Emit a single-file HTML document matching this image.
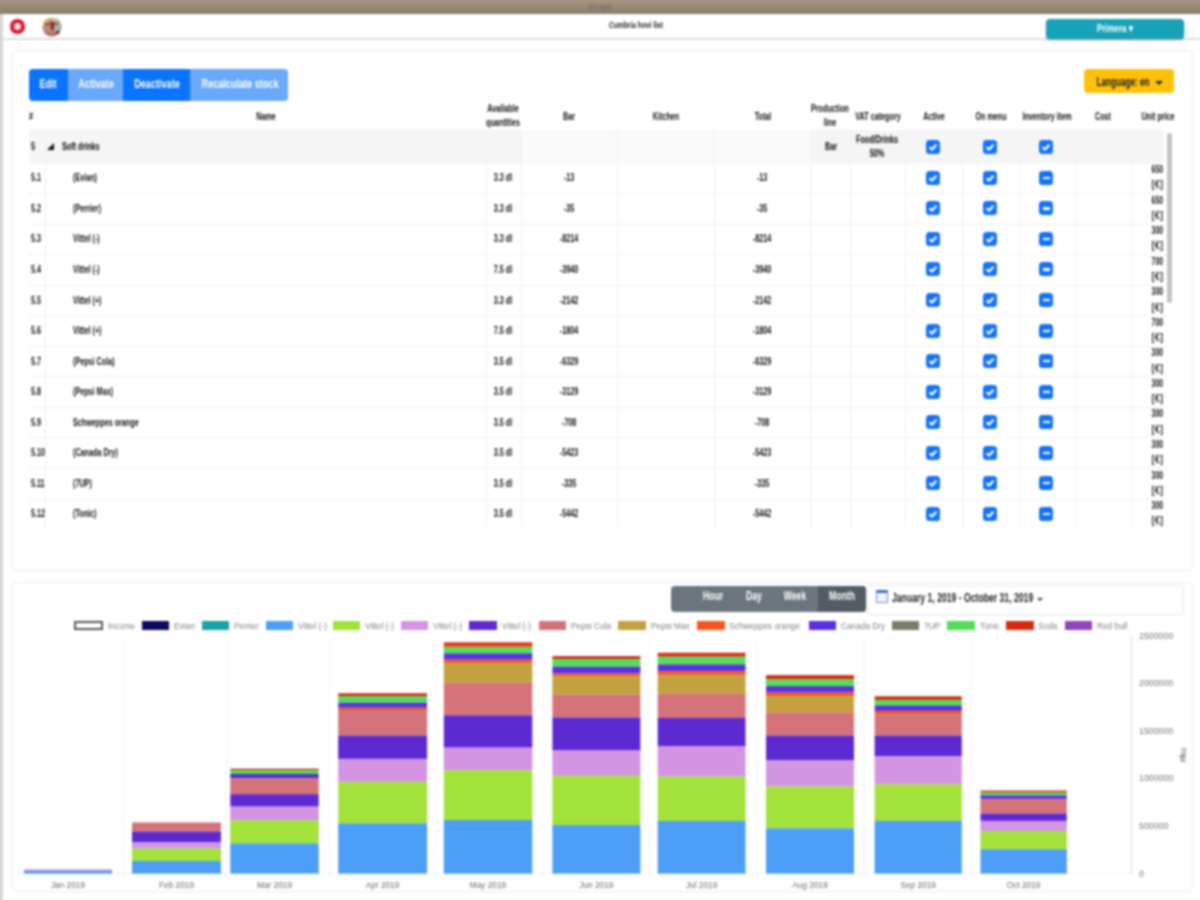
<!DOCTYPE html>
<html><head><meta charset="utf-8">
<style>
*{margin:0;padding:0;box-sizing:border-box}
html,body{width:1200px;height:900px;overflow:hidden;background:#fff;font-family:"Liberation Sans",sans-serif}
.t{position:absolute;white-space:nowrap}
</style></head><body><div id="w" style="position:absolute;left:0;top:0;width:1200px;height:900px;filter:blur(0.8px)">
<div style="position:absolute;left:-6px;top:-6px;width:1212px;height:19.5px;background:linear-gradient(#a59684 0,#a59684 6px,#8c7b69)"></div>
<div class="t" style="left:400.0px;width:400px;text-align:center;top:1.8px;font-size:8px;line-height:10.4px;font-weight:normal;color:#6d6660;transform:scaleX(0.8);transform-origin:50% 50%;">Vi-Lagre</div>
<div style="position:absolute;left:-6px;top:13.5px;width:8.5px;height:893px;background:#d6d6d6"></div>
<div style="position:absolute;left:2px;top:38px;width:1198px;height:1.5px;background:#dddddd"></div>
<div style="position:absolute;left:10px;top:19px;width:14.5px;height:14.5px;border-radius:50%;background:#df1530"></div>
<div style="position:absolute;left:13.5px;top:22.5px;width:7.5px;height:7.5px;border-radius:50%;background:#ece0e0"></div>
<svg style="position:absolute;left:41.5px;top:16.5px" width="20" height="20" viewBox="0 0 20 20"><defs><clipPath id="av"><circle cx="10" cy="10" r="9.6"/></clipPath></defs>
<g clip-path="url(#av)"><rect width="20" height="20" fill="#b9897c"/>
<path d="M0 0 H11 Q9 3 6 5 Q3 6 2 9 H0Z" fill="#d9b45a"/>
<path d="M9 0 H16 Q14 3 12 4 Q10 3 9 0Z" fill="#cfd2b0"/>
<rect x="13" y="3" width="7" height="11" fill="#a9b2a8"/>
<rect x="3" y="6" width="13" height="2" fill="#8a5a4a"/>
<path d="M8.5 5 H12 L11.5 13 H9Z" fill="#a3202a"/>
<circle cx="16" cy="15.5" r="1.8" fill="#5a2a2a"/>
<rect x="2" y="15" width="12" height="4" fill="#a87868"/></g></svg>
<div class="t" style="left:435.8px;width:400px;text-align:center;top:19.6px;font-size:9px;line-height:11.7px;font-weight:bold;color:#222;transform:scaleX(0.74);transform-origin:50% 50%;">Cumbria hovi list</div>
<div style="position:absolute;left:1046px;top:19px;width:138px;height:19.5px;border-radius:4px;background:#17a2b8;box-shadow:0 1px 2px rgba(0,0,0,.35)"></div>
<div class="t" style="left:915.0px;width:400px;text-align:center;top:20.9px;font-size:11px;line-height:14.3px;font-weight:bold;color:#fff;transform:scaleX(0.72);transform-origin:50% 50%;">Primera ▾</div>

<div style="position:absolute;left:12px;top:50px;width:1181px;height:521px;border:1px solid #eeeeee;border-radius:4px"></div>
<div style="position:absolute;left:29px;top:69px;width:259px;height:32px;border-radius:4px;overflow:hidden">
 <div style="position:absolute;left:0;top:0;width:39px;height:32px;background:#0a74ff"></div>
 <div style="position:absolute;left:39px;top:0;width:55px;height:32px;background:#69a8fa"></div>
 <div style="position:absolute;left:94px;top:0;width:67px;height:32px;background:#0a74ff"></div>
 <div style="position:absolute;left:161px;top:0;width:98px;height:32px;background:#69a8fa"></div>
</div>
<div class="t" style="left:-152.0px;width:400px;text-align:center;top:76.0px;font-size:13px;line-height:16.9px;font-weight:bold;color:#fff;transform:scaleX(0.7);transform-origin:50% 50%;">Edit</div>
<div class="t" style="left:-104.5px;width:400px;text-align:center;top:76.0px;font-size:13px;line-height:16.9px;font-weight:bold;color:#fff;transform:scaleX(0.7);transform-origin:50% 50%;">Activate</div>
<div class="t" style="left:-43.0px;width:400px;text-align:center;top:76.0px;font-size:13px;line-height:16.9px;font-weight:bold;color:#fff;transform:scaleX(0.7);transform-origin:50% 50%;">Deactivate</div>
<div class="t" style="left:39.5px;width:400px;text-align:center;top:76.0px;font-size:13px;line-height:16.9px;font-weight:bold;color:#fff;transform:scaleX(0.7);transform-origin:50% 50%;">Recalculate stock</div>
<div style="position:absolute;left:1084px;top:69px;width:90px;height:24px;border-radius:4px;background:#ffc107"></div>
<div class="t" style="left:922.5px;width:400px;text-align:center;top:75.2px;font-size:12px;line-height:15.6px;font-weight:bold;color:#1a1a1a;transform:scaleX(0.68);transform-origin:50% 50%;">Language: en</div>
<div style="position:absolute;left:1155px;top:80.5px;width:0;height:0;border-left:4px solid transparent;border-right:4px solid transparent;border-top:4px solid #222"></div>
<div style="position:absolute;left:29px;top:130px;width:1135px;height:33.5px;background:#f5f5f5"></div>
<div style="position:absolute;left:521px;top:130px;width:289px;height:33.5px;background:#fafafa"></div>
<div style="position:absolute;left:45px;top:130px;width:1px;height:398px;background:#f2f2f2"></div>
<div style="position:absolute;left:486px;top:130px;width:1px;height:398px;background:#f2f2f2"></div>
<div style="position:absolute;left:521px;top:130px;width:1px;height:398px;background:#f2f2f2"></div>
<div style="position:absolute;left:617px;top:130px;width:1px;height:398px;background:#f2f2f2"></div>
<div style="position:absolute;left:714px;top:130px;width:1px;height:398px;background:#f2f2f2"></div>
<div style="position:absolute;left:810px;top:130px;width:1px;height:398px;background:#f2f2f2"></div>
<div style="position:absolute;left:850px;top:130px;width:1px;height:398px;background:#f2f2f2"></div>
<div style="position:absolute;left:905px;top:130px;width:1px;height:398px;background:#f2f2f2"></div>
<div style="position:absolute;left:962px;top:130px;width:1px;height:398px;background:#f2f2f2"></div>
<div style="position:absolute;left:1019px;top:130px;width:1px;height:398px;background:#f2f2f2"></div>
<div style="position:absolute;left:1075px;top:130px;width:1px;height:398px;background:#f2f2f2"></div>
<div style="position:absolute;left:1131px;top:130px;width:1px;height:398px;background:#f2f2f2"></div>
<div class="t" style="left:29.0px;top:108.8px;font-size:11px;line-height:14.3px;font-weight:bold;color:#111;transform:scaleX(0.655);transform-origin:0 50%;">#</div>
<div class="t" style="left:65.5px;width:400px;text-align:center;top:108.8px;font-size:11px;line-height:14.3px;font-weight:bold;color:#111;transform:scaleX(0.655);transform-origin:50% 50%;">Name</div>
<div class="t" style="left:303.0px;width:400px;text-align:center;top:101.3px;font-size:11px;line-height:14.3px;font-weight:bold;color:#111;transform:scaleX(0.655);transform-origin:50% 50%;">Available</div>
<div class="t" style="left:303.0px;width:400px;text-align:center;top:115.3px;font-size:11px;line-height:14.3px;font-weight:bold;color:#111;transform:scaleX(0.655);transform-origin:50% 50%;">quantities</div>
<div class="t" style="left:369.0px;width:400px;text-align:center;top:108.8px;font-size:11px;line-height:14.3px;font-weight:bold;color:#111;transform:scaleX(0.655);transform-origin:50% 50%;">Bar</div>
<div class="t" style="left:465.5px;width:400px;text-align:center;top:108.8px;font-size:11px;line-height:14.3px;font-weight:bold;color:#111;transform:scaleX(0.655);transform-origin:50% 50%;">Kitchen</div>
<div class="t" style="left:563.0px;width:400px;text-align:center;top:108.8px;font-size:11px;line-height:14.3px;font-weight:bold;color:#111;transform:scaleX(0.655);transform-origin:50% 50%;">Total</div>
<div class="t" style="left:630.0px;width:400px;text-align:center;top:101.3px;font-size:11px;line-height:14.3px;font-weight:bold;color:#111;transform:scaleX(0.655);transform-origin:50% 50%;">Production</div>
<div class="t" style="left:630.0px;width:400px;text-align:center;top:115.3px;font-size:11px;line-height:14.3px;font-weight:bold;color:#111;transform:scaleX(0.655);transform-origin:50% 50%;">line</div>
<div class="t" style="left:677.5px;width:400px;text-align:center;top:108.8px;font-size:11px;line-height:14.3px;font-weight:bold;color:#111;transform:scaleX(0.655);transform-origin:50% 50%;">VAT category</div>
<div class="t" style="left:734.0px;width:400px;text-align:center;top:108.8px;font-size:11px;line-height:14.3px;font-weight:bold;color:#111;transform:scaleX(0.655);transform-origin:50% 50%;">Active</div>
<div class="t" style="left:790.5px;width:400px;text-align:center;top:108.8px;font-size:11px;line-height:14.3px;font-weight:bold;color:#111;transform:scaleX(0.655);transform-origin:50% 50%;">On menu</div>
<div class="t" style="left:847.0px;width:400px;text-align:center;top:108.8px;font-size:11px;line-height:14.3px;font-weight:bold;color:#111;transform:scaleX(0.655);transform-origin:50% 50%;">Inventory item</div>
<div class="t" style="left:903.0px;width:400px;text-align:center;top:108.8px;font-size:11px;line-height:14.3px;font-weight:bold;color:#111;transform:scaleX(0.655);transform-origin:50% 50%;">Cost</div>
<div class="t" style="left:958.0px;width:400px;text-align:center;top:108.8px;font-size:11px;line-height:14.3px;font-weight:bold;color:#111;transform:scaleX(0.655);transform-origin:50% 50%;">Unit price</div>
<div class="t" style="left:31.0px;top:138.8px;font-size:11px;line-height:14.3px;font-weight:bold;color:#111;transform:scaleX(0.655);transform-origin:0 50%;">5</div>
<div style="position:absolute;left:47px;top:143px;width:0;height:0;border-left:7px solid transparent;border-bottom:7px solid #111"></div>
<div class="t" style="left:62.0px;top:138.8px;font-size:11px;line-height:14.3px;font-weight:bold;color:#111;transform:scaleX(0.655);transform-origin:0 50%;">Soft drinks</div>
<div class="t" style="left:630.5px;width:400px;text-align:center;top:138.8px;font-size:11px;line-height:14.3px;font-weight:bold;color:#111;transform:scaleX(0.655);transform-origin:50% 50%;">Bar</div>
<div class="t" style="left:677.0px;width:400px;text-align:center;top:131.8px;font-size:11px;line-height:14.3px;font-weight:bold;color:#111;transform:scaleX(0.655);transform-origin:50% 50%;">Food/Drinks</div>
<div class="t" style="left:677.0px;width:400px;text-align:center;top:146.3px;font-size:11px;line-height:14.3px;font-weight:bold;color:#111;transform:scaleX(0.655);transform-origin:50% 50%;">50%</div>
<div style="position:absolute;left:926.4px;top:139.5px;width:14px;height:14px;border-radius:3.5px;background:#1472f7"><svg width="14" height="14" style="position:absolute;left:0;top:0"><path d="M3.6 7.3 L6 9.5 L10.5 4.8" fill="none" stroke="#fff" stroke-width="2.2"/></svg></div>
<div style="position:absolute;left:982.6px;top:139.5px;width:14px;height:14px;border-radius:3.5px;background:#1472f7"><svg width="14" height="14" style="position:absolute;left:0;top:0"><path d="M3.6 7.3 L6 9.5 L10.5 4.8" fill="none" stroke="#fff" stroke-width="2.2"/></svg></div>
<div style="position:absolute;left:1039.0px;top:139.5px;width:14px;height:14px;border-radius:3.5px;background:#1472f7"><svg width="14" height="14" style="position:absolute;left:0;top:0"><path d="M3.6 7.3 L6 9.5 L10.5 4.8" fill="none" stroke="#fff" stroke-width="2.2"/></svg></div>
<div style="position:absolute;left:29px;top:193.1px;width:1138px;height:1px;background:#efefef"></div>
<div class="t" style="left:30.5px;top:170.3px;font-size:11px;line-height:14.3px;font-weight:bold;color:#111;transform:scaleX(0.655);transform-origin:0 50%;">5.1</div>
<div class="t" style="left:73.0px;top:170.3px;font-size:11px;line-height:14.3px;font-weight:bold;color:#111;transform:scaleX(0.655);transform-origin:0 50%;">(Evian)</div>
<div class="t" style="left:303.0px;width:400px;text-align:center;top:170.3px;font-size:11px;line-height:14.3px;font-weight:bold;color:#111;transform:scaleX(0.655);transform-origin:50% 50%;">3.3 dl</div>
<div class="t" style="left:369.0px;width:400px;text-align:center;top:170.3px;font-size:11px;line-height:14.3px;font-weight:bold;color:#111;transform:scaleX(0.655);transform-origin:50% 50%;">-13</div>
<div class="t" style="left:562.0px;width:400px;text-align:center;top:170.3px;font-size:11px;line-height:14.3px;font-weight:bold;color:#111;transform:scaleX(0.655);transform-origin:50% 50%;">-13</div>
<div class="t" style="left:763.0px;width:400px;text-align:right;top:162.0px;font-size:11px;line-height:14.3px;font-weight:bold;color:#111;transform:scaleX(0.62);transform-origin:100% 50%;">650</div>
<div class="t" style="left:763.0px;width:400px;text-align:right;top:177.3px;font-size:11px;line-height:14.3px;font-weight:bold;color:#333;transform:scaleX(0.85);transform-origin:100% 50%;">[€]</div>
<div style="position:absolute;left:926.4px;top:170.8px;width:14px;height:14px;border-radius:3.5px;background:#1472f7"><svg width="14" height="14" style="position:absolute;left:0;top:0"><path d="M3.6 7.3 L6 9.5 L10.5 4.8" fill="none" stroke="#fff" stroke-width="2.2"/></svg></div>
<div style="position:absolute;left:982.6px;top:170.8px;width:14px;height:14px;border-radius:3.5px;background:#1472f7"><svg width="14" height="14" style="position:absolute;left:0;top:0"><path d="M3.6 7.3 L6 9.5 L10.5 4.8" fill="none" stroke="#fff" stroke-width="2.2"/></svg></div>
<div style="position:absolute;left:1039.0px;top:170.8px;width:14px;height:14px;border-radius:3.5px;background:#1472f7"><div style="position:absolute;left:3.5px;top:6px;width:7px;height:2.2px;background:#fff"></div></div>
<div style="position:absolute;left:29px;top:223.6px;width:1138px;height:1px;background:#efefef"></div>
<div class="t" style="left:30.5px;top:200.9px;font-size:11px;line-height:14.3px;font-weight:bold;color:#111;transform:scaleX(0.655);transform-origin:0 50%;">5.2</div>
<div class="t" style="left:73.0px;top:200.9px;font-size:11px;line-height:14.3px;font-weight:bold;color:#111;transform:scaleX(0.655);transform-origin:0 50%;">(Perrier)</div>
<div class="t" style="left:303.0px;width:400px;text-align:center;top:200.9px;font-size:11px;line-height:14.3px;font-weight:bold;color:#111;transform:scaleX(0.655);transform-origin:50% 50%;">3.3 dl</div>
<div class="t" style="left:369.0px;width:400px;text-align:center;top:200.9px;font-size:11px;line-height:14.3px;font-weight:bold;color:#111;transform:scaleX(0.655);transform-origin:50% 50%;">-35</div>
<div class="t" style="left:562.0px;width:400px;text-align:center;top:200.9px;font-size:11px;line-height:14.3px;font-weight:bold;color:#111;transform:scaleX(0.655);transform-origin:50% 50%;">-35</div>
<div class="t" style="left:763.0px;width:400px;text-align:right;top:192.6px;font-size:11px;line-height:14.3px;font-weight:bold;color:#111;transform:scaleX(0.62);transform-origin:100% 50%;">650</div>
<div class="t" style="left:763.0px;width:400px;text-align:right;top:207.9px;font-size:11px;line-height:14.3px;font-weight:bold;color:#333;transform:scaleX(0.85);transform-origin:100% 50%;">[€]</div>
<div style="position:absolute;left:926.4px;top:201.4px;width:14px;height:14px;border-radius:3.5px;background:#1472f7"><svg width="14" height="14" style="position:absolute;left:0;top:0"><path d="M3.6 7.3 L6 9.5 L10.5 4.8" fill="none" stroke="#fff" stroke-width="2.2"/></svg></div>
<div style="position:absolute;left:982.6px;top:201.4px;width:14px;height:14px;border-radius:3.5px;background:#1472f7"><svg width="14" height="14" style="position:absolute;left:0;top:0"><path d="M3.6 7.3 L6 9.5 L10.5 4.8" fill="none" stroke="#fff" stroke-width="2.2"/></svg></div>
<div style="position:absolute;left:1039.0px;top:201.4px;width:14px;height:14px;border-radius:3.5px;background:#1472f7"><div style="position:absolute;left:3.5px;top:6px;width:7px;height:2.2px;background:#fff"></div></div>
<div style="position:absolute;left:29px;top:254.2px;width:1138px;height:1px;background:#efefef"></div>
<div class="t" style="left:30.5px;top:231.4px;font-size:11px;line-height:14.3px;font-weight:bold;color:#111;transform:scaleX(0.655);transform-origin:0 50%;">5.3</div>
<div class="t" style="left:73.0px;top:231.4px;font-size:11px;line-height:14.3px;font-weight:bold;color:#111;transform:scaleX(0.655);transform-origin:0 50%;">Vittel (-)</div>
<div class="t" style="left:303.0px;width:400px;text-align:center;top:231.4px;font-size:11px;line-height:14.3px;font-weight:bold;color:#111;transform:scaleX(0.655);transform-origin:50% 50%;">3.3 dl</div>
<div class="t" style="left:369.0px;width:400px;text-align:center;top:231.4px;font-size:11px;line-height:14.3px;font-weight:bold;color:#111;transform:scaleX(0.655);transform-origin:50% 50%;">-8214</div>
<div class="t" style="left:562.0px;width:400px;text-align:center;top:231.4px;font-size:11px;line-height:14.3px;font-weight:bold;color:#111;transform:scaleX(0.655);transform-origin:50% 50%;">-8214</div>
<div class="t" style="left:763.0px;width:400px;text-align:right;top:223.1px;font-size:11px;line-height:14.3px;font-weight:bold;color:#111;transform:scaleX(0.62);transform-origin:100% 50%;">300</div>
<div class="t" style="left:763.0px;width:400px;text-align:right;top:238.4px;font-size:11px;line-height:14.3px;font-weight:bold;color:#333;transform:scaleX(0.85);transform-origin:100% 50%;">[€]</div>
<div style="position:absolute;left:926.4px;top:231.9px;width:14px;height:14px;border-radius:3.5px;background:#1472f7"><svg width="14" height="14" style="position:absolute;left:0;top:0"><path d="M3.6 7.3 L6 9.5 L10.5 4.8" fill="none" stroke="#fff" stroke-width="2.2"/></svg></div>
<div style="position:absolute;left:982.6px;top:231.9px;width:14px;height:14px;border-radius:3.5px;background:#1472f7"><svg width="14" height="14" style="position:absolute;left:0;top:0"><path d="M3.6 7.3 L6 9.5 L10.5 4.8" fill="none" stroke="#fff" stroke-width="2.2"/></svg></div>
<div style="position:absolute;left:1039.0px;top:231.9px;width:14px;height:14px;border-radius:3.5px;background:#1472f7"><div style="position:absolute;left:3.5px;top:6px;width:7px;height:2.2px;background:#fff"></div></div>
<div style="position:absolute;left:29px;top:284.7px;width:1138px;height:1px;background:#efefef"></div>
<div class="t" style="left:30.5px;top:262.0px;font-size:11px;line-height:14.3px;font-weight:bold;color:#111;transform:scaleX(0.655);transform-origin:0 50%;">5.4</div>
<div class="t" style="left:73.0px;top:262.0px;font-size:11px;line-height:14.3px;font-weight:bold;color:#111;transform:scaleX(0.655);transform-origin:0 50%;">Vittel (-)</div>
<div class="t" style="left:303.0px;width:400px;text-align:center;top:262.0px;font-size:11px;line-height:14.3px;font-weight:bold;color:#111;transform:scaleX(0.655);transform-origin:50% 50%;">7.5 dl</div>
<div class="t" style="left:369.0px;width:400px;text-align:center;top:262.0px;font-size:11px;line-height:14.3px;font-weight:bold;color:#111;transform:scaleX(0.655);transform-origin:50% 50%;">-3940</div>
<div class="t" style="left:562.0px;width:400px;text-align:center;top:262.0px;font-size:11px;line-height:14.3px;font-weight:bold;color:#111;transform:scaleX(0.655);transform-origin:50% 50%;">-3940</div>
<div class="t" style="left:763.0px;width:400px;text-align:right;top:253.7px;font-size:11px;line-height:14.3px;font-weight:bold;color:#111;transform:scaleX(0.62);transform-origin:100% 50%;">700</div>
<div class="t" style="left:763.0px;width:400px;text-align:right;top:269.0px;font-size:11px;line-height:14.3px;font-weight:bold;color:#333;transform:scaleX(0.85);transform-origin:100% 50%;">[€]</div>
<div style="position:absolute;left:926.4px;top:262.4px;width:14px;height:14px;border-radius:3.5px;background:#1472f7"><svg width="14" height="14" style="position:absolute;left:0;top:0"><path d="M3.6 7.3 L6 9.5 L10.5 4.8" fill="none" stroke="#fff" stroke-width="2.2"/></svg></div>
<div style="position:absolute;left:982.6px;top:262.4px;width:14px;height:14px;border-radius:3.5px;background:#1472f7"><svg width="14" height="14" style="position:absolute;left:0;top:0"><path d="M3.6 7.3 L6 9.5 L10.5 4.8" fill="none" stroke="#fff" stroke-width="2.2"/></svg></div>
<div style="position:absolute;left:1039.0px;top:262.4px;width:14px;height:14px;border-radius:3.5px;background:#1472f7"><div style="position:absolute;left:3.5px;top:6px;width:7px;height:2.2px;background:#fff"></div></div>
<div style="position:absolute;left:29px;top:315.2px;width:1138px;height:1px;background:#efefef"></div>
<div class="t" style="left:30.5px;top:292.6px;font-size:11px;line-height:14.3px;font-weight:bold;color:#111;transform:scaleX(0.655);transform-origin:0 50%;">5.5</div>
<div class="t" style="left:73.0px;top:292.6px;font-size:11px;line-height:14.3px;font-weight:bold;color:#111;transform:scaleX(0.655);transform-origin:0 50%;">Vittel (+)</div>
<div class="t" style="left:303.0px;width:400px;text-align:center;top:292.6px;font-size:11px;line-height:14.3px;font-weight:bold;color:#111;transform:scaleX(0.655);transform-origin:50% 50%;">3.3 dl</div>
<div class="t" style="left:369.0px;width:400px;text-align:center;top:292.6px;font-size:11px;line-height:14.3px;font-weight:bold;color:#111;transform:scaleX(0.655);transform-origin:50% 50%;">-2142</div>
<div class="t" style="left:562.0px;width:400px;text-align:center;top:292.6px;font-size:11px;line-height:14.3px;font-weight:bold;color:#111;transform:scaleX(0.655);transform-origin:50% 50%;">-2142</div>
<div class="t" style="left:763.0px;width:400px;text-align:right;top:284.2px;font-size:11px;line-height:14.3px;font-weight:bold;color:#111;transform:scaleX(0.62);transform-origin:100% 50%;">300</div>
<div class="t" style="left:763.0px;width:400px;text-align:right;top:299.6px;font-size:11px;line-height:14.3px;font-weight:bold;color:#333;transform:scaleX(0.85);transform-origin:100% 50%;">[€]</div>
<div style="position:absolute;left:926.4px;top:293.0px;width:14px;height:14px;border-radius:3.5px;background:#1472f7"><svg width="14" height="14" style="position:absolute;left:0;top:0"><path d="M3.6 7.3 L6 9.5 L10.5 4.8" fill="none" stroke="#fff" stroke-width="2.2"/></svg></div>
<div style="position:absolute;left:982.6px;top:293.0px;width:14px;height:14px;border-radius:3.5px;background:#1472f7"><svg width="14" height="14" style="position:absolute;left:0;top:0"><path d="M3.6 7.3 L6 9.5 L10.5 4.8" fill="none" stroke="#fff" stroke-width="2.2"/></svg></div>
<div style="position:absolute;left:1039.0px;top:293.0px;width:14px;height:14px;border-radius:3.5px;background:#1472f7"><div style="position:absolute;left:3.5px;top:6px;width:7px;height:2.2px;background:#fff"></div></div>
<div style="position:absolute;left:29px;top:345.8px;width:1138px;height:1px;background:#efefef"></div>
<div class="t" style="left:30.5px;top:323.1px;font-size:11px;line-height:14.3px;font-weight:bold;color:#111;transform:scaleX(0.655);transform-origin:0 50%;">5.6</div>
<div class="t" style="left:73.0px;top:323.1px;font-size:11px;line-height:14.3px;font-weight:bold;color:#111;transform:scaleX(0.655);transform-origin:0 50%;">Vittel (+)</div>
<div class="t" style="left:303.0px;width:400px;text-align:center;top:323.1px;font-size:11px;line-height:14.3px;font-weight:bold;color:#111;transform:scaleX(0.655);transform-origin:50% 50%;">7.5 dl</div>
<div class="t" style="left:369.0px;width:400px;text-align:center;top:323.1px;font-size:11px;line-height:14.3px;font-weight:bold;color:#111;transform:scaleX(0.655);transform-origin:50% 50%;">-1804</div>
<div class="t" style="left:562.0px;width:400px;text-align:center;top:323.1px;font-size:11px;line-height:14.3px;font-weight:bold;color:#111;transform:scaleX(0.655);transform-origin:50% 50%;">-1804</div>
<div class="t" style="left:763.0px;width:400px;text-align:right;top:314.8px;font-size:11px;line-height:14.3px;font-weight:bold;color:#111;transform:scaleX(0.62);transform-origin:100% 50%;">700</div>
<div class="t" style="left:763.0px;width:400px;text-align:right;top:330.1px;font-size:11px;line-height:14.3px;font-weight:bold;color:#333;transform:scaleX(0.85);transform-origin:100% 50%;">[€]</div>
<div style="position:absolute;left:926.4px;top:323.6px;width:14px;height:14px;border-radius:3.5px;background:#1472f7"><svg width="14" height="14" style="position:absolute;left:0;top:0"><path d="M3.6 7.3 L6 9.5 L10.5 4.8" fill="none" stroke="#fff" stroke-width="2.2"/></svg></div>
<div style="position:absolute;left:982.6px;top:323.6px;width:14px;height:14px;border-radius:3.5px;background:#1472f7"><svg width="14" height="14" style="position:absolute;left:0;top:0"><path d="M3.6 7.3 L6 9.5 L10.5 4.8" fill="none" stroke="#fff" stroke-width="2.2"/></svg></div>
<div style="position:absolute;left:1039.0px;top:323.6px;width:14px;height:14px;border-radius:3.5px;background:#1472f7"><div style="position:absolute;left:3.5px;top:6px;width:7px;height:2.2px;background:#fff"></div></div>
<div style="position:absolute;left:29px;top:376.4px;width:1138px;height:1px;background:#efefef"></div>
<div class="t" style="left:30.5px;top:353.7px;font-size:11px;line-height:14.3px;font-weight:bold;color:#111;transform:scaleX(0.655);transform-origin:0 50%;">5.7</div>
<div class="t" style="left:73.0px;top:353.7px;font-size:11px;line-height:14.3px;font-weight:bold;color:#111;transform:scaleX(0.655);transform-origin:0 50%;">(Pepsi Cola)</div>
<div class="t" style="left:303.0px;width:400px;text-align:center;top:353.7px;font-size:11px;line-height:14.3px;font-weight:bold;color:#111;transform:scaleX(0.655);transform-origin:50% 50%;">3.5 dl</div>
<div class="t" style="left:369.0px;width:400px;text-align:center;top:353.7px;font-size:11px;line-height:14.3px;font-weight:bold;color:#111;transform:scaleX(0.655);transform-origin:50% 50%;">-6329</div>
<div class="t" style="left:562.0px;width:400px;text-align:center;top:353.7px;font-size:11px;line-height:14.3px;font-weight:bold;color:#111;transform:scaleX(0.655);transform-origin:50% 50%;">-6329</div>
<div class="t" style="left:763.0px;width:400px;text-align:right;top:345.4px;font-size:11px;line-height:14.3px;font-weight:bold;color:#111;transform:scaleX(0.62);transform-origin:100% 50%;">300</div>
<div class="t" style="left:763.0px;width:400px;text-align:right;top:360.7px;font-size:11px;line-height:14.3px;font-weight:bold;color:#333;transform:scaleX(0.85);transform-origin:100% 50%;">[€]</div>
<div style="position:absolute;left:926.4px;top:354.1px;width:14px;height:14px;border-radius:3.5px;background:#1472f7"><svg width="14" height="14" style="position:absolute;left:0;top:0"><path d="M3.6 7.3 L6 9.5 L10.5 4.8" fill="none" stroke="#fff" stroke-width="2.2"/></svg></div>
<div style="position:absolute;left:982.6px;top:354.1px;width:14px;height:14px;border-radius:3.5px;background:#1472f7"><svg width="14" height="14" style="position:absolute;left:0;top:0"><path d="M3.6 7.3 L6 9.5 L10.5 4.8" fill="none" stroke="#fff" stroke-width="2.2"/></svg></div>
<div style="position:absolute;left:1039.0px;top:354.1px;width:14px;height:14px;border-radius:3.5px;background:#1472f7"><div style="position:absolute;left:3.5px;top:6px;width:7px;height:2.2px;background:#fff"></div></div>
<div style="position:absolute;left:29px;top:406.9px;width:1138px;height:1px;background:#efefef"></div>
<div class="t" style="left:30.5px;top:384.2px;font-size:11px;line-height:14.3px;font-weight:bold;color:#111;transform:scaleX(0.655);transform-origin:0 50%;">5.8</div>
<div class="t" style="left:73.0px;top:384.2px;font-size:11px;line-height:14.3px;font-weight:bold;color:#111;transform:scaleX(0.655);transform-origin:0 50%;">(Pepsi Max)</div>
<div class="t" style="left:303.0px;width:400px;text-align:center;top:384.2px;font-size:11px;line-height:14.3px;font-weight:bold;color:#111;transform:scaleX(0.655);transform-origin:50% 50%;">3.5 dl</div>
<div class="t" style="left:369.0px;width:400px;text-align:center;top:384.2px;font-size:11px;line-height:14.3px;font-weight:bold;color:#111;transform:scaleX(0.655);transform-origin:50% 50%;">-3129</div>
<div class="t" style="left:562.0px;width:400px;text-align:center;top:384.2px;font-size:11px;line-height:14.3px;font-weight:bold;color:#111;transform:scaleX(0.655);transform-origin:50% 50%;">-3129</div>
<div class="t" style="left:763.0px;width:400px;text-align:right;top:375.9px;font-size:11px;line-height:14.3px;font-weight:bold;color:#111;transform:scaleX(0.62);transform-origin:100% 50%;">300</div>
<div class="t" style="left:763.0px;width:400px;text-align:right;top:391.2px;font-size:11px;line-height:14.3px;font-weight:bold;color:#333;transform:scaleX(0.85);transform-origin:100% 50%;">[€]</div>
<div style="position:absolute;left:926.4px;top:384.7px;width:14px;height:14px;border-radius:3.5px;background:#1472f7"><svg width="14" height="14" style="position:absolute;left:0;top:0"><path d="M3.6 7.3 L6 9.5 L10.5 4.8" fill="none" stroke="#fff" stroke-width="2.2"/></svg></div>
<div style="position:absolute;left:982.6px;top:384.7px;width:14px;height:14px;border-radius:3.5px;background:#1472f7"><svg width="14" height="14" style="position:absolute;left:0;top:0"><path d="M3.6 7.3 L6 9.5 L10.5 4.8" fill="none" stroke="#fff" stroke-width="2.2"/></svg></div>
<div style="position:absolute;left:1039.0px;top:384.7px;width:14px;height:14px;border-radius:3.5px;background:#1472f7"><div style="position:absolute;left:3.5px;top:6px;width:7px;height:2.2px;background:#fff"></div></div>
<div style="position:absolute;left:29px;top:437.4px;width:1138px;height:1px;background:#efefef"></div>
<div class="t" style="left:30.5px;top:414.8px;font-size:11px;line-height:14.3px;font-weight:bold;color:#111;transform:scaleX(0.655);transform-origin:0 50%;">5.9</div>
<div class="t" style="left:73.0px;top:414.8px;font-size:11px;line-height:14.3px;font-weight:bold;color:#111;transform:scaleX(0.655);transform-origin:0 50%;">Schweppes orange</div>
<div class="t" style="left:303.0px;width:400px;text-align:center;top:414.8px;font-size:11px;line-height:14.3px;font-weight:bold;color:#111;transform:scaleX(0.655);transform-origin:50% 50%;">3.5 dl</div>
<div class="t" style="left:369.0px;width:400px;text-align:center;top:414.8px;font-size:11px;line-height:14.3px;font-weight:bold;color:#111;transform:scaleX(0.655);transform-origin:50% 50%;">-708</div>
<div class="t" style="left:562.0px;width:400px;text-align:center;top:414.8px;font-size:11px;line-height:14.3px;font-weight:bold;color:#111;transform:scaleX(0.655);transform-origin:50% 50%;">-708</div>
<div class="t" style="left:763.0px;width:400px;text-align:right;top:406.4px;font-size:11px;line-height:14.3px;font-weight:bold;color:#111;transform:scaleX(0.62);transform-origin:100% 50%;">300</div>
<div class="t" style="left:763.0px;width:400px;text-align:right;top:421.8px;font-size:11px;line-height:14.3px;font-weight:bold;color:#333;transform:scaleX(0.85);transform-origin:100% 50%;">[€]</div>
<div style="position:absolute;left:926.4px;top:415.2px;width:14px;height:14px;border-radius:3.5px;background:#1472f7"><svg width="14" height="14" style="position:absolute;left:0;top:0"><path d="M3.6 7.3 L6 9.5 L10.5 4.8" fill="none" stroke="#fff" stroke-width="2.2"/></svg></div>
<div style="position:absolute;left:982.6px;top:415.2px;width:14px;height:14px;border-radius:3.5px;background:#1472f7"><svg width="14" height="14" style="position:absolute;left:0;top:0"><path d="M3.6 7.3 L6 9.5 L10.5 4.8" fill="none" stroke="#fff" stroke-width="2.2"/></svg></div>
<div style="position:absolute;left:1039.0px;top:415.2px;width:14px;height:14px;border-radius:3.5px;background:#1472f7"><div style="position:absolute;left:3.5px;top:6px;width:7px;height:2.2px;background:#fff"></div></div>
<div style="position:absolute;left:29px;top:468.0px;width:1138px;height:1px;background:#efefef"></div>
<div class="t" style="left:30.5px;top:445.3px;font-size:11px;line-height:14.3px;font-weight:bold;color:#111;transform:scaleX(0.655);transform-origin:0 50%;">5.10</div>
<div class="t" style="left:73.0px;top:445.3px;font-size:11px;line-height:14.3px;font-weight:bold;color:#111;transform:scaleX(0.655);transform-origin:0 50%;">(Canada Dry)</div>
<div class="t" style="left:303.0px;width:400px;text-align:center;top:445.3px;font-size:11px;line-height:14.3px;font-weight:bold;color:#111;transform:scaleX(0.655);transform-origin:50% 50%;">3.5 dl</div>
<div class="t" style="left:369.0px;width:400px;text-align:center;top:445.3px;font-size:11px;line-height:14.3px;font-weight:bold;color:#111;transform:scaleX(0.655);transform-origin:50% 50%;">-5423</div>
<div class="t" style="left:562.0px;width:400px;text-align:center;top:445.3px;font-size:11px;line-height:14.3px;font-weight:bold;color:#111;transform:scaleX(0.655);transform-origin:50% 50%;">-5423</div>
<div class="t" style="left:763.0px;width:400px;text-align:right;top:437.0px;font-size:11px;line-height:14.3px;font-weight:bold;color:#111;transform:scaleX(0.62);transform-origin:100% 50%;">300</div>
<div class="t" style="left:763.0px;width:400px;text-align:right;top:452.3px;font-size:11px;line-height:14.3px;font-weight:bold;color:#333;transform:scaleX(0.85);transform-origin:100% 50%;">[€]</div>
<div style="position:absolute;left:926.4px;top:445.8px;width:14px;height:14px;border-radius:3.5px;background:#1472f7"><svg width="14" height="14" style="position:absolute;left:0;top:0"><path d="M3.6 7.3 L6 9.5 L10.5 4.8" fill="none" stroke="#fff" stroke-width="2.2"/></svg></div>
<div style="position:absolute;left:982.6px;top:445.8px;width:14px;height:14px;border-radius:3.5px;background:#1472f7"><svg width="14" height="14" style="position:absolute;left:0;top:0"><path d="M3.6 7.3 L6 9.5 L10.5 4.8" fill="none" stroke="#fff" stroke-width="2.2"/></svg></div>
<div style="position:absolute;left:1039.0px;top:445.8px;width:14px;height:14px;border-radius:3.5px;background:#1472f7"><div style="position:absolute;left:3.5px;top:6px;width:7px;height:2.2px;background:#fff"></div></div>
<div style="position:absolute;left:29px;top:498.6px;width:1138px;height:1px;background:#efefef"></div>
<div class="t" style="left:30.5px;top:475.9px;font-size:11px;line-height:14.3px;font-weight:bold;color:#111;transform:scaleX(0.655);transform-origin:0 50%;">5.11</div>
<div class="t" style="left:73.0px;top:475.9px;font-size:11px;line-height:14.3px;font-weight:bold;color:#111;transform:scaleX(0.655);transform-origin:0 50%;">(7UP)</div>
<div class="t" style="left:303.0px;width:400px;text-align:center;top:475.9px;font-size:11px;line-height:14.3px;font-weight:bold;color:#111;transform:scaleX(0.655);transform-origin:50% 50%;">3.5 dl</div>
<div class="t" style="left:369.0px;width:400px;text-align:center;top:475.9px;font-size:11px;line-height:14.3px;font-weight:bold;color:#111;transform:scaleX(0.655);transform-origin:50% 50%;">-335</div>
<div class="t" style="left:562.0px;width:400px;text-align:center;top:475.9px;font-size:11px;line-height:14.3px;font-weight:bold;color:#111;transform:scaleX(0.655);transform-origin:50% 50%;">-335</div>
<div class="t" style="left:763.0px;width:400px;text-align:right;top:467.6px;font-size:11px;line-height:14.3px;font-weight:bold;color:#111;transform:scaleX(0.62);transform-origin:100% 50%;">300</div>
<div class="t" style="left:763.0px;width:400px;text-align:right;top:482.9px;font-size:11px;line-height:14.3px;font-weight:bold;color:#333;transform:scaleX(0.85);transform-origin:100% 50%;">[€]</div>
<div style="position:absolute;left:926.4px;top:476.3px;width:14px;height:14px;border-radius:3.5px;background:#1472f7"><svg width="14" height="14" style="position:absolute;left:0;top:0"><path d="M3.6 7.3 L6 9.5 L10.5 4.8" fill="none" stroke="#fff" stroke-width="2.2"/></svg></div>
<div style="position:absolute;left:982.6px;top:476.3px;width:14px;height:14px;border-radius:3.5px;background:#1472f7"><svg width="14" height="14" style="position:absolute;left:0;top:0"><path d="M3.6 7.3 L6 9.5 L10.5 4.8" fill="none" stroke="#fff" stroke-width="2.2"/></svg></div>
<div style="position:absolute;left:1039.0px;top:476.3px;width:14px;height:14px;border-radius:3.5px;background:#1472f7"><div style="position:absolute;left:3.5px;top:6px;width:7px;height:2.2px;background:#fff"></div></div>
<div class="t" style="left:30.5px;top:506.4px;font-size:11px;line-height:14.3px;font-weight:bold;color:#111;transform:scaleX(0.655);transform-origin:0 50%;">5.12</div>
<div class="t" style="left:73.0px;top:506.4px;font-size:11px;line-height:14.3px;font-weight:bold;color:#111;transform:scaleX(0.655);transform-origin:0 50%;">(Tonic)</div>
<div class="t" style="left:303.0px;width:400px;text-align:center;top:506.4px;font-size:11px;line-height:14.3px;font-weight:bold;color:#111;transform:scaleX(0.655);transform-origin:50% 50%;">3.5 dl</div>
<div class="t" style="left:369.0px;width:400px;text-align:center;top:506.4px;font-size:11px;line-height:14.3px;font-weight:bold;color:#111;transform:scaleX(0.655);transform-origin:50% 50%;">-5442</div>
<div class="t" style="left:562.0px;width:400px;text-align:center;top:506.4px;font-size:11px;line-height:14.3px;font-weight:bold;color:#111;transform:scaleX(0.655);transform-origin:50% 50%;">-5442</div>
<div class="t" style="left:763.0px;width:400px;text-align:right;top:498.1px;font-size:11px;line-height:14.3px;font-weight:bold;color:#111;transform:scaleX(0.62);transform-origin:100% 50%;">300</div>
<div class="t" style="left:763.0px;width:400px;text-align:right;top:513.4px;font-size:11px;line-height:14.3px;font-weight:bold;color:#333;transform:scaleX(0.85);transform-origin:100% 50%;">[€]</div>
<div style="position:absolute;left:926.4px;top:506.8px;width:14px;height:14px;border-radius:3.5px;background:#1472f7"><svg width="14" height="14" style="position:absolute;left:0;top:0"><path d="M3.6 7.3 L6 9.5 L10.5 4.8" fill="none" stroke="#fff" stroke-width="2.2"/></svg></div>
<div style="position:absolute;left:982.6px;top:506.8px;width:14px;height:14px;border-radius:3.5px;background:#1472f7"><svg width="14" height="14" style="position:absolute;left:0;top:0"><path d="M3.6 7.3 L6 9.5 L10.5 4.8" fill="none" stroke="#fff" stroke-width="2.2"/></svg></div>
<div style="position:absolute;left:1039.0px;top:506.8px;width:14px;height:14px;border-radius:3.5px;background:#1472f7"><div style="position:absolute;left:3.5px;top:6px;width:7px;height:2.2px;background:#fff"></div></div>
<div style="position:absolute;left:1167px;top:133px;width:5px;height:170px;background:#c4c4c4;border-radius:2px"></div>

<div style="position:absolute;left:12px;top:582px;width:1181px;height:310px;border:1px solid #eeeeee;border-radius:4px"></div>
<div style="position:absolute;left:671px;top:586px;width:195px;height:26px;border-radius:4px;overflow:hidden;background:#6c757d">
 <div style="position:absolute;left:147px;top:0;width:48px;height:26px;background:#545b62"></div>
</div>
<div class="t" style="left:513.0px;width:400px;text-align:center;top:588.7px;font-size:12px;line-height:15.6px;font-weight:bold;color:#fff;transform:scaleX(0.72);transform-origin:50% 50%;">Hour</div>
<div class="t" style="left:553.5px;width:400px;text-align:center;top:588.7px;font-size:12px;line-height:15.6px;font-weight:bold;color:#fff;transform:scaleX(0.72);transform-origin:50% 50%;">Day</div>
<div class="t" style="left:594.5px;width:400px;text-align:center;top:588.7px;font-size:12px;line-height:15.6px;font-weight:bold;color:#fff;transform:scaleX(0.72);transform-origin:50% 50%;">Week</div>
<div class="t" style="left:642.0px;width:400px;text-align:center;top:588.7px;font-size:12px;line-height:15.6px;font-weight:bold;color:#fff;transform:scaleX(0.72);transform-origin:50% 50%;">Month</div>
<div style="position:absolute;left:867px;top:585px;width:317px;height:30px;border:1px solid #e6e6e6;border-radius:2px"></div>
<div style="position:absolute;left:876px;top:590px;width:12px;height:13px;border:1px solid #6a8fc8;border-top:3px solid #3d6fc0;background:#eef3fb"></div>
<div class="t" style="left:892.0px;top:591.2px;font-size:12px;line-height:15.6px;font-weight:bold;color:#222;transform:scaleX(0.72);transform-origin:0 50%;">January 1, 2019 - October 31, 2019</div>
<div style="position:absolute;left:1037px;top:598px;width:0;height:0;border-left:3px solid transparent;border-right:3px solid transparent;border-top:3px solid #333"></div>
<svg width="1200" height="900" style="position:absolute;left:0;top:0">
<line x1="123" y1="637" x2="123" y2="878" stroke="#f3f3f3" stroke-width="1"/>
<line x1="226.5" y1="637" x2="226.5" y2="878" stroke="#f3f3f3" stroke-width="1"/>
<line x1="330" y1="637" x2="330" y2="878" stroke="#f3f3f3" stroke-width="1"/>
<line x1="436" y1="637" x2="436" y2="878" stroke="#f3f3f3" stroke-width="1"/>
<line x1="542" y1="637" x2="542" y2="878" stroke="#f3f3f3" stroke-width="1"/>
<line x1="649" y1="637" x2="649" y2="878" stroke="#f3f3f3" stroke-width="1"/>
<line x1="757" y1="637" x2="757" y2="878" stroke="#f3f3f3" stroke-width="1"/>
<line x1="864" y1="637" x2="864" y2="878" stroke="#f3f3f3" stroke-width="1"/>
<line x1="971" y1="637" x2="971" y2="878" stroke="#f3f3f3" stroke-width="1"/>
<line x1="17" y1="873.6" x2="1131" y2="873.6" stroke="#f0f0f0" stroke-width="1"/>
<line x1="1131.5" y1="635" x2="1131.5" y2="874" stroke="#dddddd" stroke-width="1"/>
<text x="1139" y="876.6" font-family="Liberation Sans" font-size="8.5" fill="#777" textLength="4.9" lengthAdjust="spacingAndGlyphs">0</text>
<text x="1139" y="829.0" font-family="Liberation Sans" font-size="8.5" fill="#777" textLength="29.4" lengthAdjust="spacingAndGlyphs">500000</text>
<text x="1139" y="781.4" font-family="Liberation Sans" font-size="8.5" fill="#777" textLength="34.3" lengthAdjust="spacingAndGlyphs">1000000</text>
<text x="1139" y="733.7" font-family="Liberation Sans" font-size="8.5" fill="#777" textLength="34.3" lengthAdjust="spacingAndGlyphs">1500000</text>
<text x="1139" y="686.1" font-family="Liberation Sans" font-size="8.5" fill="#777" textLength="34.3" lengthAdjust="spacingAndGlyphs">2000000</text>
<text x="1139" y="638.5" font-family="Liberation Sans" font-size="8.5" fill="#777" textLength="34.3" lengthAdjust="spacingAndGlyphs">2500000</text>
<text transform="translate(1185.5,755) rotate(-90)" font-family="Liberation Sans" font-size="9" fill="#555" text-anchor="middle">#ku</text>
<rect x="24.0" y="869.3" width="88.0" height="1.7" fill="#d394e2"/>
<rect x="24.0" y="871.0" width="88.0" height="2.6" fill="#4c9ef7"/>
<rect x="132.0" y="822.5" width="89.0" height="9.0" fill="#d4737a"/>
<rect x="132.0" y="831.5" width="89.0" height="10.5" fill="#5d29d1"/>
<rect x="132.0" y="842.0" width="89.0" height="6.6" fill="#d394e2"/>
<rect x="132.0" y="848.6" width="89.0" height="12.4" fill="#a3e23b"/>
<rect x="132.0" y="861.0" width="89.0" height="12.6" fill="#4c9ef7"/>
<rect x="230.3" y="768.7" width="88.4" height="1.3" fill="#d42b10"/>
<rect x="230.3" y="770.0" width="88.4" height="4.0" fill="#55dc5a"/>
<rect x="230.3" y="774.0" width="88.4" height="4.4" fill="#5d29d1"/>
<rect x="230.3" y="778.4" width="88.4" height="15.8" fill="#d4737a"/>
<rect x="230.3" y="794.2" width="88.4" height="12.4" fill="#5d29d1"/>
<rect x="230.3" y="806.6" width="88.4" height="13.6" fill="#d394e2"/>
<rect x="230.3" y="820.2" width="88.4" height="23.2" fill="#a3e23b"/>
<rect x="230.3" y="843.4" width="88.4" height="30.2" fill="#4c9ef7"/>
<rect x="338.2" y="693.3" width="88.9" height="2.7" fill="#d42b10"/>
<rect x="338.2" y="696.0" width="88.9" height="6.7" fill="#55dc5a"/>
<rect x="338.2" y="702.7" width="88.9" height="5.1" fill="#5b30e0"/>
<rect x="338.2" y="707.8" width="88.9" height="2.2" fill="#f4571f"/>
<rect x="338.2" y="710.0" width="88.9" height="25.6" fill="#d4737a"/>
<rect x="338.2" y="735.6" width="88.9" height="23.3" fill="#5d29d1"/>
<rect x="338.2" y="758.9" width="88.9" height="22.9" fill="#d394e2"/>
<rect x="338.2" y="781.8" width="88.9" height="41.5" fill="#a3e23b"/>
<rect x="338.2" y="823.3" width="88.9" height="50.3" fill="#4c9ef7"/>
<rect x="443.8" y="642.4" width="88.5" height="2.7" fill="#d42b10"/>
<rect x="443.8" y="645.1" width="88.5" height="1.9" fill="#f4571f"/>
<rect x="443.8" y="647.0" width="88.5" height="6.4" fill="#55dc5a"/>
<rect x="443.8" y="653.4" width="88.5" height="6.3" fill="#5b30e0"/>
<rect x="443.8" y="659.7" width="88.5" height="3.8" fill="#f4571f"/>
<rect x="443.8" y="663.5" width="88.5" height="19.3" fill="#c3a13f"/>
<rect x="443.8" y="682.8" width="88.5" height="32.5" fill="#d4737a"/>
<rect x="443.8" y="715.3" width="88.5" height="32.4" fill="#5d29d1"/>
<rect x="443.8" y="747.7" width="88.5" height="22.6" fill="#d394e2"/>
<rect x="443.8" y="770.3" width="88.5" height="49.7" fill="#a3e23b"/>
<rect x="443.8" y="820.0" width="88.5" height="53.6" fill="#4c9ef7"/>
<rect x="552.4" y="656.1" width="88.0" height="3.1" fill="#d42b10"/>
<rect x="552.4" y="659.2" width="88.0" height="7.5" fill="#55dc5a"/>
<rect x="552.4" y="666.7" width="88.0" height="6.8" fill="#5b30e0"/>
<rect x="552.4" y="673.5" width="88.0" height="2.7" fill="#f4571f"/>
<rect x="552.4" y="676.2" width="88.0" height="18.4" fill="#c3a13f"/>
<rect x="552.4" y="694.6" width="88.0" height="22.9" fill="#d4737a"/>
<rect x="552.4" y="717.5" width="88.0" height="33.0" fill="#5d29d1"/>
<rect x="552.4" y="750.5" width="88.0" height="25.3" fill="#d394e2"/>
<rect x="552.4" y="775.8" width="88.0" height="49.2" fill="#a3e23b"/>
<rect x="552.4" y="825.0" width="88.0" height="48.6" fill="#4c9ef7"/>
<rect x="657.7" y="652.8" width="87.8" height="3.9" fill="#d42b10"/>
<rect x="657.7" y="656.7" width="87.8" height="7.7" fill="#55dc5a"/>
<rect x="657.7" y="664.4" width="87.8" height="6.9" fill="#5b30e0"/>
<rect x="657.7" y="671.3" width="87.8" height="4.1" fill="#f4571f"/>
<rect x="657.7" y="675.4" width="87.8" height="18.4" fill="#c3a13f"/>
<rect x="657.7" y="693.8" width="87.8" height="24.2" fill="#d4737a"/>
<rect x="657.7" y="718.0" width="87.8" height="28.0" fill="#5d29d1"/>
<rect x="657.7" y="746.0" width="87.8" height="30.6" fill="#d394e2"/>
<rect x="657.7" y="776.6" width="87.8" height="44.4" fill="#a3e23b"/>
<rect x="657.7" y="821.0" width="87.8" height="52.6" fill="#4c9ef7"/>
<rect x="766.0" y="675.1" width="88.0" height="4.2" fill="#d42b10"/>
<rect x="766.0" y="679.3" width="88.0" height="6.8" fill="#55dc5a"/>
<rect x="766.0" y="686.1" width="88.0" height="6.4" fill="#5b30e0"/>
<rect x="766.0" y="692.5" width="88.0" height="3.8" fill="#f4571f"/>
<rect x="766.0" y="696.3" width="88.0" height="16.0" fill="#c3a13f"/>
<rect x="766.0" y="712.3" width="88.0" height="23.3" fill="#d4737a"/>
<rect x="766.0" y="735.6" width="88.0" height="24.8" fill="#5d29d1"/>
<rect x="766.0" y="760.4" width="88.0" height="26.1" fill="#d394e2"/>
<rect x="766.0" y="786.5" width="88.0" height="41.8" fill="#a3e23b"/>
<rect x="766.0" y="828.3" width="88.0" height="45.3" fill="#4c9ef7"/>
<rect x="874.6" y="696.3" width="87.2" height="3.6" fill="#d42b10"/>
<rect x="874.6" y="699.9" width="87.2" height="5.5" fill="#55dc5a"/>
<rect x="874.6" y="705.4" width="87.2" height="5.5" fill="#5b30e0"/>
<rect x="874.6" y="710.9" width="87.2" height="3.6" fill="#f4571f"/>
<rect x="874.6" y="714.5" width="87.2" height="21.1" fill="#d4737a"/>
<rect x="874.6" y="735.6" width="87.2" height="20.7" fill="#5d29d1"/>
<rect x="874.6" y="756.3" width="87.2" height="28.0" fill="#d394e2"/>
<rect x="874.6" y="784.3" width="87.2" height="36.6" fill="#a3e23b"/>
<rect x="874.6" y="820.9" width="87.2" height="52.7" fill="#4c9ef7"/>
<rect x="980.5" y="790.6" width="86.3" height="2.0" fill="#d42b10"/>
<rect x="980.5" y="792.6" width="86.3" height="2.7" fill="#55dc5a"/>
<rect x="980.5" y="795.3" width="86.3" height="3.6" fill="#5b30e0"/>
<rect x="980.5" y="798.9" width="86.3" height="14.6" fill="#d4737a"/>
<rect x="980.5" y="813.5" width="86.3" height="7.4" fill="#5d29d1"/>
<rect x="980.5" y="820.9" width="86.3" height="10.2" fill="#d394e2"/>
<rect x="980.5" y="831.1" width="86.3" height="18.1" fill="#a3e23b"/>
<rect x="980.5" y="849.2" width="86.3" height="24.4" fill="#4c9ef7"/>
<text x="68.0" y="888" font-family="Liberation Sans" font-size="8.3" fill="#6a6a6a" text-anchor="middle">Jan 2019</text>
<text x="176.5" y="888" font-family="Liberation Sans" font-size="8.3" fill="#6a6a6a" text-anchor="middle">Feb 2019</text>
<text x="274.5" y="888" font-family="Liberation Sans" font-size="8.3" fill="#6a6a6a" text-anchor="middle">Mar 2019</text>
<text x="382.6" y="888" font-family="Liberation Sans" font-size="8.3" fill="#6a6a6a" text-anchor="middle">Apr 2019</text>
<text x="488.0" y="888" font-family="Liberation Sans" font-size="8.3" fill="#6a6a6a" text-anchor="middle">May 2019</text>
<text x="596.4" y="888" font-family="Liberation Sans" font-size="8.3" fill="#6a6a6a" text-anchor="middle">Jun 2019</text>
<text x="701.6" y="888" font-family="Liberation Sans" font-size="8.3" fill="#6a6a6a" text-anchor="middle">Jul 2019</text>
<text x="810.0" y="888" font-family="Liberation Sans" font-size="8.3" fill="#6a6a6a" text-anchor="middle">Aug 2019</text>
<text x="918.2" y="888" font-family="Liberation Sans" font-size="8.3" fill="#6a6a6a" text-anchor="middle">Sep 2019</text>
<text x="1023.6" y="888" font-family="Liberation Sans" font-size="8.3" fill="#6a6a6a" text-anchor="middle">Oct 2019</text>
<rect x="75" y="622" width="27" height="7" fill="#fff" stroke="#555" stroke-width="2"/>
<text x="108" y="628.8" font-family="Liberation Sans" font-size="8.3" fill="#808080">Income</text>
<rect x="142" y="621" width="27" height="9" fill="#0d0b5e"/>
<text x="174" y="628.8" font-family="Liberation Sans" font-size="8.3" fill="#808080">Evian</text>
<rect x="202" y="621" width="27" height="9" fill="#17a3a8"/>
<text x="234" y="628.8" font-family="Liberation Sans" font-size="8.3" fill="#808080">Perrier</text>
<rect x="266" y="621" width="27" height="9" fill="#4c9ef7"/>
<text x="298" y="628.8" font-family="Liberation Sans" font-size="8.3" fill="#808080">Vittel (-)</text>
<rect x="333" y="621" width="27" height="9" fill="#a3e23b"/>
<text x="365" y="628.8" font-family="Liberation Sans" font-size="8.3" fill="#808080">Vittel (-)</text>
<rect x="401" y="621" width="27" height="9" fill="#d394e2"/>
<text x="433" y="628.8" font-family="Liberation Sans" font-size="8.3" fill="#808080">Vittel (-)</text>
<rect x="469" y="621" width="28" height="9" fill="#5d29d1"/>
<text x="502" y="628.8" font-family="Liberation Sans" font-size="8.3" fill="#808080">Vittel (-)</text>
<rect x="539" y="621" width="27" height="9" fill="#d4737a"/>
<text x="571" y="628.8" font-family="Liberation Sans" font-size="8.3" fill="#808080">Pepsi Cola</text>
<rect x="618" y="621" width="28" height="9" fill="#c3a13f"/>
<text x="651" y="628.8" font-family="Liberation Sans" font-size="8.3" fill="#808080">Pepsi Max</text>
<rect x="697" y="621" width="28" height="9" fill="#f4571f"/>
<text x="729" y="628.8" font-family="Liberation Sans" font-size="8.3" fill="#808080">Schweppes orange</text>
<rect x="809" y="621" width="27" height="9" fill="#5b30e0"/>
<text x="841" y="628.8" font-family="Liberation Sans" font-size="8.3" fill="#808080">Canada Dry</text>
<rect x="892" y="621" width="27" height="9" fill="#7b7d68"/>
<text x="924" y="628.8" font-family="Liberation Sans" font-size="8.3" fill="#808080">7UP</text>
<rect x="947" y="621" width="28" height="9" fill="#55dc5a"/>
<text x="980" y="628.8" font-family="Liberation Sans" font-size="8.3" fill="#808080">Tonic</text>
<rect x="1006" y="621" width="28" height="9" fill="#d42b10"/>
<text x="1038" y="628.8" font-family="Liberation Sans" font-size="8.3" fill="#808080">Soda</text>
<rect x="1065" y="621" width="27" height="9" fill="#8e45b6"/>
<text x="1097" y="628.8" font-family="Liberation Sans" font-size="8.3" fill="#808080">Red bull</text>
</svg>
</div></body></html>
